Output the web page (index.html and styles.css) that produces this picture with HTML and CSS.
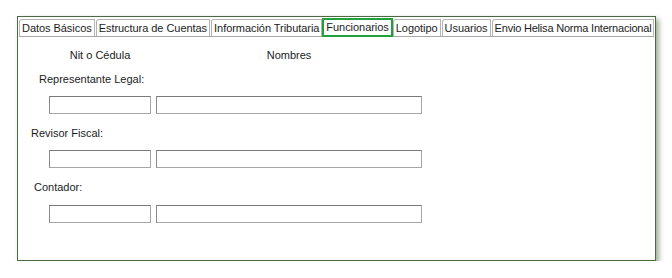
FILE: index.html
```html
<!DOCTYPE html>
<html lang="es">
<head>
<meta charset="utf-8">
<title>Funcionarios</title>
<link rel="stylesheet" href="styles.css">
</head>
<body>
<div class="frame">
  <div class="tabs">
    <div class="tab">Datos Básicos</div>
    <div class="tab">Estructura de Cuentas</div>
    <div class="tab">Información Tributaria</div>
    <div class="tab tab-active">Funcionarios</div>
    <div class="tab">Logotipo</div>
    <div class="tab">Usuarios</div>
    <div class="tab tab-long">Envio Helisa Norma Internacional</div>
  </div>
  <div class="panel">
    <div class="head-row">
      <span class="col-nit">Nit o Cédula</span>
      <span class="col-nom">Nombres</span>
    </div>
    <div class="section">
      <div class="label label-rep">Representante Legal:</div>
      <div class="inputs"><input class="in-nit" type="text"><input class="in-nom" type="text"></div>
    </div>
    <div class="section">
      <div class="label label-rev">Revisor Fiscal:</div>
      <div class="inputs"><input class="in-nit" type="text"><input class="in-nom" type="text"></div>
    </div>
    <div class="section">
      <div class="label label-con">Contador:</div>
      <div class="inputs"><input class="in-nit" type="text"><input class="in-nom" type="text"></div>
    </div>
  </div>
</div>
</body>
</html>
```

FILE: styles.css
```css
html, body {
  margin: 0;
  padding: 0;
  background: #ffffff;
}
body {
  font-family: "Liberation Sans", Arial, sans-serif;
  font-size: 11px;
  color: #1c1c1c;
}
.frame {
  box-sizing: border-box;
  margin: 16px 0 0 17px;
  width: 639px;
  height: 245px;
  border: 1px solid #4c6a42;
  box-shadow: 3px 3px 5px rgba(75, 110, 60, 0.55);
  background: #fff;
}
.tabs {
  display: flex;
  gap: 1px;
  margin: 2px 1px 0 1px;
  border-bottom: 1px solid #a8a8a8;
}
.tab {
  position: relative;
  height: 16px;
  line-height: 16px;
  padding: 0 2px;
  border: 1px solid #b4b4b4;
  border-bottom: none;
  border-top-left-radius: 3px;
  white-space: nowrap;
  letter-spacing: -0.05px;
  color: #1c1c1c;
}
.tab-long {
  letter-spacing: -0.2px;
}
.tab-active {
  border: 2px solid #22a03c;
  border-radius: 0;
  height: 15px;
  line-height: 15px;
  margin: -1px;
  z-index: 1;
}
.panel {
  padding-top: 12px;
}
.head-row,
.inputs {
  display: flex;
  gap: 5px;
  padding-left: 31px;
}
.head-row {
  line-height: 13px;
  color: #222;
}
.col-nit {
  width: 102px;
  text-align: center;
}
.col-nom {
  width: 266px;
  text-align: center;
}
.section {
  margin-top: 11px;
}
.section + .section {
  margin-top: 13px;
}
.label {
  line-height: 13px;
  margin-bottom: 10px;
  color: #1c1c1c;
}
.label-rep { padding-left: 21px; }
.label-rev { padding-left: 13px; }
.label-con { padding-left: 16px; margin-bottom: 11px; }
.inputs input {
  box-sizing: border-box;
  height: 18px;
  margin: 0;
  padding: 0;
  border: 1px solid #8a8a8a;
  border-right-color: #a6a6a6;
  border-bottom-color: #a6a6a6;
  border-top-color: #7a7a7a;
  background: #fff;
  font: inherit;
}
.in-nit { width: 102px; }
.in-nom { width: 266px; }
```
